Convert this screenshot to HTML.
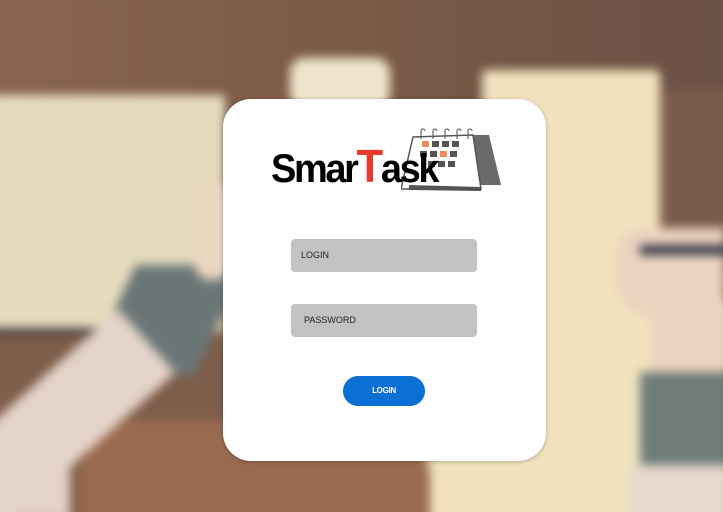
<!DOCTYPE html>
<html><head><style>
html,body{margin:0;padding:0;width:723px;height:512px;overflow:hidden}
body{position:relative;background:#7a5a47;font-family:"Liberation Sans",sans-serif}
.bg{position:absolute;left:0;top:0;width:723px;height:512px;filter:blur(5px)}
.bg div{position:absolute}
.card{position:absolute;left:223px;top:99px;width:323px;height:362px;background:#fff;border-radius:28px;box-shadow:0 1px 4px rgba(0,0,0,.25)}
.inp{position:absolute;left:68px;width:186px;height:33px;background:#c3c3c3;border-radius:4px;font-size:9px;color:#222;line-height:33px}
.btn{position:absolute;left:120px;top:277px;width:82px;height:30px;border-radius:15px;background:#0b6fd5;color:#fff;font-size:8px;font-weight:bold;text-align:center;line-height:30px;letter-spacing:-.3px}
</style></head><body>
<div class="bg">
 <div style="left:-10px;top:-10px;width:750px;height:120px;background:linear-gradient(90deg,#8a6550,#7a5946 50%,#6b5045)"></div>
 <div style="left:-10px;top:330px;width:440px;height:200px;background:#7e5d4a"></div>
 <div style="left:-10px;top:95px;width:235px;height:237px;background:#e6dbbd"></div>
 <div style="left:-10px;top:328px;width:110px;height:6px;background:#3c3a44"></div>
 <div style="left:290px;top:58px;width:100px;height:50px;background:#efe5cc;border-radius:14px"></div>
 <div style="left:482px;top:70px;width:178px;height:460px;background:#f1e2bd;border-radius:6px"></div>
 <div style="left:420px;top:380px;width:120px;height:150px;background:#f1e2bd"></div>
 <div style="left:660px;top:90px;width:80px;height:150px;background:#7a5c4a"></div>
 <div style="left:615px;top:228px;width:110px;height:90px;background:#ecd3bf;border-radius:30px 0 0 40px"></div>
 <div style="left:650px;top:300px;width:80px;height:80px;background:#ecd3bf"></div>
 <div style="left:640px;top:245px;width:90px;height:10px;background:#2e3444"></div>
 <div style="left:640px;top:372px;width:90px;height:100px;background:#6f7c78"></div>
 <div style="left:630px;top:465px;width:100px;height:60px;background:#e7d9cd"></div>
 <div style="left:80px;top:420px;width:350px;height:110px;background:#9a6a50;border-radius:60px 60px 0 0"></div>
 <div style="left:110px;top:265px;width:110px;height:110px;background:#6a7676;transform:skewX(-25deg)"></div>
 <div style="left:195px;top:180px;width:35px;height:100px;background:#ebd6c0;border-radius:15px"></div>
 <div style="left:-60px;top:470px;width:240px;height:85px;background:#e4d3c9;transform:rotate(-42deg);transform-origin:left top"></div>
 <div style="left:-10px;top:420px;width:80px;height:100px;background:#e4d3c9"></div>
</div>
<div class="card">
 <svg style="position:absolute;left:178px;top:28px" width="100" height="66" viewBox="0 0 100 66">
  <polygon points="52,8 88,8 100,58 80,58" fill="#6a6a6a"/>
  <polygon points="12,10 72,8 80,62 0,62" fill="#fff" stroke="#555" stroke-width="1.5"/>
  <polygon points="8,58 80,60 80,64 8,63" fill="#555"/>
  <g fill="none" stroke="#666" stroke-width="1.2">
   <path d="M20,12 v-8 a2,2 0 0 1 4,0"/><path d="M32,12 v-8 a2,2 0 0 1 4,0"/><path d="M44,12 v-8 a2,2 0 0 1 4,0"/><path d="M56,12 v-8 a2,2 0 0 1 4,0"/><path d="M67,12 v-8 a2,2 0 0 1 4,0"/>
  </g>
  <g fill="#555">
   <rect x="21" y="14" width="7" height="6" fill="#f08a5d"/><rect x="31" y="14" width="7" height="6"/><rect x="41" y="14" width="7" height="6"/><rect x="51" y="14" width="7" height="6"/>
   <rect x="19" y="24" width="7" height="6"/><rect x="29" y="24" width="7" height="6"/><rect x="39" y="24" width="7" height="6" fill="#f08a5d"/><rect x="49" y="24" width="7" height="6"/>
   <rect x="27" y="34" width="7" height="6"/><rect x="37" y="34" width="7" height="6"/><rect x="47" y="34" width="7" height="6"/>
  </g>
 </svg>
 <div style="position:absolute;left:48px;top:44px;font-size:40px;font-weight:bold;letter-spacing:-2.5px;color:#000;line-height:46px;transform:scaleX(.95);transform-origin:left">Smar<span style="color:#e8392a;font-size:46px">T</span>ask</div>
 <div class="inp" style="top:140px;padding-left:10px;width:176px">LOGIN</div>
 <div class="inp" style="top:205px;padding-left:13px;width:173px">PASSWORD</div>
 <div class="btn">LOGIN</div>
</div>
</body></html>
